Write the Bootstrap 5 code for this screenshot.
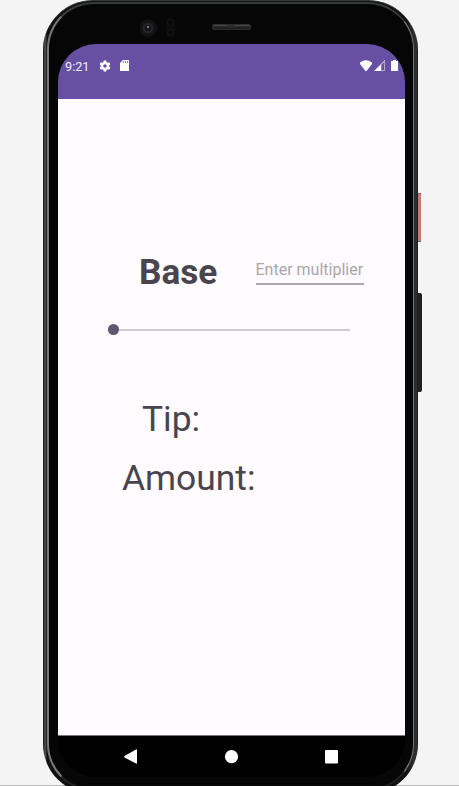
<!DOCTYPE html>
<html lang="en">
<head>
<meta charset="utf-8">
<meta name="viewport" content="width=device-width, initial-scale=1">
<title>Tip calculator</title>
<link href="https://cdn.jsdelivr.net/npm/bootstrap@5.3.0/dist/css/bootstrap.min.css" rel="stylesheet">
<style>
body{background:#f4f4f4;font-family:Roboto,sans-serif;color:#49454f}
.stage{width:459px;height:786px;background:linear-gradient(#b8b8b8,#b8b8b8) bottom/100% 1px no-repeat}
/* Device shell: dark edge, steel rim, inner rim */
.shell{width:375px;height:794px;margin-left:43px;flex:none;border-radius:50px;background:linear-gradient(90deg,#202122 0,#202122 1px,#58595a 2px,#38393a 3px,#111 4px,#111 364px,#2b2d2e 370px,#2b2d2e 374px,#111 375px);border-top:1px solid #38393a}
.rim{width:367px;height:789px;margin:1px 0 0 4px;border:2px solid #6a6c6e;border-color:#383b3b #717476 #222 #77797b;border-right-width:1px;border-radius:47px;background:#060607;padding:40px 8px 0 9px}
.screen{width:347px;height:733px;border-radius:38px;background:#000}
.statusbar{height:55px;flex:none;background:#6750a3;color:#fff;padding:14px 6px 0 7px}
.clock{font-size:12.7px;line-height:17px;width:34px;color:#f1edf8}
.content-area{height:637px;flex:none;background:#fffbff;border-bottom:1px solid #777}
.entry{height:43px;margin:152px 0 0 81px}
.base-text{width:116.5px;font-size:35.2px;line-height:42px;font-weight:700}
.multiplier{width:108px;height:34px;font-size:16px;line-height:20px;padding:4px 0 0!important;border-bottom:2px solid #aaa8ab!important;color:#49454f}
.multiplier::placeholder{color:#aaa7ab;opacity:1}
.amount-range{width:242px;height:11px;margin:30px 0 0 50px}
.amount-range::-webkit-slider-runnable-track{height:2px;background:#cec9ce;border-radius:0}
.amount-range::-webkit-slider-thumb{width:11px;height:11px;margin-top:-4.5px;background:#5d5771}
.result{font-size:35.4px;line-height:42px}
.tip{margin:63px 0 0 84px}
.amount{margin:17px 0 0 64px}
.sysnav{height:41px;background:#000}
.camera{left:140px;top:18px}
.power,.volume{left:418px;width:3px}
.power{top:193px;height:49px;background:#c27c70;border-top:1px solid #667;border-bottom:1px solid #667}
.volume{top:293px;width:4px;height:99px;background:#22211f;border-radius:0 2px 2px 0}
</style>
</head>
<body class="m-0 overflow-hidden">
<div class="stage position-relative overflow-hidden">
  <div class="shell overflow-hidden">
    <div class="rim">
      <main class="screen d-flex flex-column overflow-hidden">
        <header class="statusbar d-flex align-items-start">
          <span class="clock">9:21</span>
          <svg width="12" height="12" viewBox="0 0 24 24" fill="#fff" transform="translate(0 2)"><path fill-rule="evenodd" d="M9.500 1h5l.6 3.200 2.100 1.200L20.300 4.300l2.500 4.300L20.300 10.800v2.400l2.500 2.200-2.500 4.300-3.100-1.100-2.100 1.200L14.500 23h-5l-.6-3.200-2.100-1.200-3.100 1.100-2.500-4.300 2.500-2.200v-2.400L1.200 8.600l2.500-4.300 3.100 1.100 2.100-1.200zM12 8.500a3.500 3.500 0 1 0 0 7 3.500 3.500 0 0 0 0-7z"/></svg>
          <svg width="9" height="11" viewBox="0 0 9 11" transform="translate(1 2)" class="ms-2"><path fill="#fff" d="M3 0h5.500q.5 0 .5.500v10q0 .5-.5.500h-8q-.5 0-.5-.5V3z"/><path stroke="#9b8bc2" d="M3.500 1v2M5.500 1v2M7.500 1v2"/></svg>
          <svg width="39" height="12" viewBox="0 0 39 12" class="ms-auto" transform="translate(0 2)"><path fill="#fff" d="M0 2.500Q6-2 12 2.500V4L6.500 11h-1L0 4zM14 11 25 0v11z"/><path fill="#b4a8d2" d="M21 4 25 0v11h-4z"/><path fill="#6750a3" d="M21.500 5 24 2.500V10h-2.500z"/><path fill="#fff" d="M31 1h2V0h3v1h2v10h-7z"/></svg>
        </header>
        <section class="content-area d-flex flex-column align-items-start">
          <div class="entry d-flex align-items-start">
            <label class="base-text" for="multiplier">Base</label>
            <input id="multiplier" class="multiplier border-0 rounded-0 bg-transparent" type="text" placeholder="Enter multiplier">
          </div>
          <input class="amount-range form-range" type="range" min="0" max="100" value="0" aria-label="Tip percentage">
          <div class="result tip">Tip:</div>
          <div class="result amount">Amount:</div>
        </section>
        <nav class="sysnav" aria-label="System">
          <svg class="d-block" width="347" height="41" fill="#fff"><path d="M66.500 20 78 13.500q1-.5 1 .5v13q0 1-1 .500L66.500 21.500q-1-.75 0-1.500z"/><circle cx="173.500" cy="20.700" r="6.600"/><rect x="267" y="14" width="13" height="13.500" rx="1"/></svg>
        </nav>
      </main>
    </div>
  </div>
  <svg class="camera position-absolute" width="114" height="20"><circle cx="8" cy="10" r="9" fill="#121214"/><circle cx="8" cy="10" r="5.500" fill="#222326"/><circle cx="8" cy="10" r="3" fill="#101217"/><circle cx="8" cy="9" r="1.200" fill="#777b80"/><rect x="26" y="0" width="9" height="19" rx="4" fill="#0c0c0d"/><circle cx="30.500" cy="4.500" r="3" fill="#08080a" stroke="#151516"/><circle cx="30.500" cy="14.500" r="3" fill="#08080a" stroke="#151516"/><rect x="72" y="6" width="39" height="6" rx="2" fill="#2c2c2c"/><path stroke="#484848" d="M74 7.500h13M95 7.500h14"/><path stroke="#181818" d="M74 10h35"/></svg>
  <span class="power position-absolute"></span>
  <span class="volume position-absolute"></span>
</div>
<script src="https://cdn.jsdelivr.net/npm/bootstrap@5.3.0/dist/js/bootstrap.bundle.min.js"></script>
</body>
</html>
